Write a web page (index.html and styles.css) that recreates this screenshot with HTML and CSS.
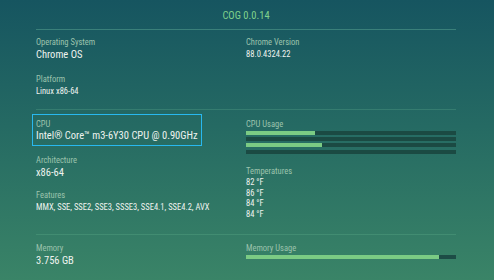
FILE: index.html
```html
<!DOCTYPE html>
<html>
<head>
<meta charset="utf-8">
<link rel="stylesheet" href="styles.css">
</head>
<body>
<div class="app">
  <header class="title">COG 0.0.14</header>

  <section class="sec sec-os">
    <div class="col">
      <div class="field">
        <div class="label">Operating System</div>
        <div class="value big">Chrome OS</div>
      </div>
      <div class="field platform">
        <div class="label">Platform</div>
        <div class="value">Linux x86-64</div>
      </div>
    </div>
    <div class="col">
      <div class="field">
        <div class="label">Chrome Version</div>
        <div class="value">88.0.4324.22</div>
      </div>
    </div>
  </section>

  <section class="sec sec-cpu">
    <div class="col">
      <div class="field cpu-box">
        <div class="label">CPU</div>
        <div class="value big">Intel® Core™ m3-6Y30 CPU @ 0.90GHz</div>
      </div>
      <div class="field arch">
        <div class="label">Architecture</div>
        <div class="value big">x86-64</div>
      </div>
      <div class="field features">
        <div class="label">Features</div>
        <div class="value">MMX, SSE, SSE2, SSE3, SSSE3, SSE4.1, SSE4.2, AVX</div>
      </div>
    </div>
    <div class="col col-right">
      <div class="field">
        <div class="label">CPU Usage</div>
        <div class="bars cpu-bars">
          <div class="bar"><div class="fill" style="width:33%"></div></div>
          <div class="bar"><div class="fill" style="width:0%"></div></div>
          <div class="bar"><div class="fill" style="width:36%"></div></div>
          <div class="bar"><div class="fill" style="width:0%"></div></div>
        </div>
      </div>
      <div class="field temps-field">
        <div class="label">Temperatures</div>
        <div class="temps">
          <div class="value">82 °F</div>
          <div class="value">86 °F</div>
          <div class="value">84 °F</div>
          <div class="value">84 °F</div>
        </div>
      </div>
    </div>
  </section>

  <section class="sec sec-mem">
    <div class="col">
      <div class="field">
        <div class="label">Memory</div>
        <div class="value big">3.756 GB</div>
      </div>
    </div>
    <div class="col">
      <div class="field">
        <div class="label">Memory Usage</div>
        <div class="bars">
          <div class="bar mem"><div class="fill" style="width:92%"></div></div>
        </div>
      </div>
    </div>
  </section>
</div>
</body>
</html>
```

FILE: styles.css
```css
html, body {
  margin: 0;
  padding: 0;
  height: 100%;
}

body {
  background: linear-gradient(180deg, #165560 0%, #256a63 45%, #3a8467 100%);
  font-family: Roboto, "Liberation Sans", sans-serif;
  font-stretch: 75%;
  color: #eef3ef;
  overflow: hidden;
}

.app {
  margin: 0 38px 0 36px;
}

.title {
  height: 30px;
  box-sizing: border-box;
  padding-top: 10px;
  font-size: 10.5px;
  line-height: 12px;
  text-align: center;
  color: #80d28c;
  border-bottom: 1px solid rgba(120, 200, 170, 0.35);
}

.sec {
  display: grid;
  grid-template-columns: 210px 210px;
  border-bottom: 1px solid rgba(120, 200, 160, 0.22);
}

.col {
  display: flex;
  flex-direction: column;
}

.label {
  font-size: 8.5px;
  line-height: 10px;
  color: #9cc3ad;
}

.value {
  margin-top: 2px;
  font-size: 8.5px;
  line-height: 10px;
  color: #eef3ef;
  white-space: nowrap;
}

.value.big {
  font-size: 10.5px;
  line-height: 12px;
}

/* Section 1 */
.sec-os {
  padding-top: 7px;
  padding-bottom: 13px;
}

.platform {
  margin-top: 13px;
}

/* Section 2 */
.sec-cpu {
  padding-bottom: 15px;
}

.cpu-box {
  margin: 4px 0 0 -4px;
  width: 170px;
  box-sizing: border-box;
  padding: 4px 3px 3px 3px;
  border: 1px solid #28b8ef;
}

.cpu-box .value {
  margin-top: 1px;
}

.arch {
  margin-top: 9px;
}

.features {
  margin-top: 11px;
}

.col-right {
  padding-top: 9px;
}

.bars {
  margin-top: 2px;
  display: flex;
  flex-direction: column;
  gap: 2px;
}

.cpu-bars .bar:nth-child(4) {
  margin-top: 1px;
}

.bar {
  height: 4px;
  background: #1b4a43;
}

.bar.mem {
  background: #1d4c46;
}

.fill {
  height: 100%;
  background: #7bcb84;
}

.temps-field {
  margin-top: 12px;
}

.temps {
  margin-top: 1px;
}

.temps .value {
  margin-top: 0;
  line-height: 10.5px;
}

/* Section 3 */
.sec-mem {
  border-bottom: none;
  padding-top: 8px;
}
```
